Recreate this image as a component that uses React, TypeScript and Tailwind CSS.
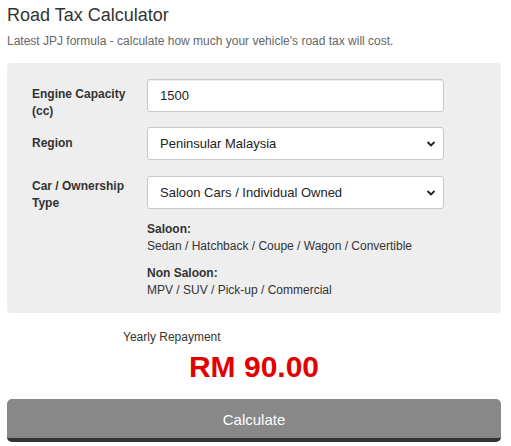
import React from "react";

function Chevron() {
  return (
    <svg width="10" height="7" viewBox="0 0 10 7" className="pointer-events-none absolute right-[8px] top-1/2 -translate-y-1/2">
      <path d="M1.5 1.5 L5 5 L8.5 1.5" fill="none" stroke="#222" strokeWidth="1.8" />
    </svg>
  );
}

export default function App() {
  return (
    <div className="w-[511px] h-[446px] bg-white pl-[7px] pr-[10px] pt-[4px] text-[#333]" style={{ fontFamily: '"Liberation Sans", Arial, sans-serif' }}>
      <h1 className="text-[18px] leading-[22px] text-[#333]">Road Tax Calculator</h1>
      <p className="mt-[7px] text-[12px] leading-[16px] text-[#666]">Latest JPJ formula - calculate how much your vehicle's road tax will cost.</p>

      <div className="mt-[14px] h-[250px] rounded-[3px] bg-[#eeeeee] pl-[25px] pt-[16px]">
        <div className="flex h-[33px] items-start">
          <label className="w-[115px] pt-[7px] text-[12px] font-bold leading-[17px] pr-[20px]">Engine Capacity (cc)</label>
          <input
            defaultValue="1500"
            className="h-[33px] w-[297px] rounded-[3px] border border-[#c8c8c8] bg-white px-[12px] text-[13px] text-[#222] shadow-[inset_0_1px_1px_rgba(0,0,0,0.08)] outline-none"
          />
        </div>
        <div className="mt-[15px] flex h-[33px] items-start">
          <label className="w-[115px] pt-[8px] text-[12px] font-bold leading-[17px]">Region</label>
          <div className="relative">
            <select className="h-[33px] w-[297px] appearance-none rounded-[3px] border border-[#c8c8c8] bg-white px-[12px] text-[13px] text-[#222] outline-none">
              <option>Peninsular Malaysia</option>
            </select>
            <Chevron />
          </div>
        </div>
        <div className="mt-[16px] flex items-start">
          <label className="w-[115px] pt-[2px] text-[12px] font-bold leading-[17px] pr-[20px]">Car / Ownership Type</label>
          <div>
            <div className="relative">
              <select className="h-[33px] w-[297px] appearance-none rounded-[3px] border border-[#c8c8c8] bg-white px-[12px] text-[13px] text-[#222] outline-none">
                <option>Saloon Cars / Individual Owned</option>
              </select>
              <Chevron />
            </div>
            <div className="mt-[12px] text-[12px] leading-[17px] text-[#333]">
              <div className="font-bold">Saloon:</div>
              <div>Sedan / Hatchback / Coupe / Wagon / Convertible</div>
              <div className="mt-[10px] font-bold">Non Saloon:</div>
              <div>MPV / SUV / Pick-up / Commercial</div>
            </div>
          </div>
        </div>
      </div>

      <div className="mt-[16px] ml-[116px] text-[12px] leading-[16px] text-[#333]">Yearly Repayment</div>
      <div className="mt-[5px] text-center text-[30px] font-bold leading-[34px] text-[#e30000]">RM 90.00</div>

      <button className="mt-[15px] flex h-[43px] w-full items-center justify-center rounded-[5px] border-b-[4px] border-[#333] bg-[#888] pt-[3px] text-[15px] text-white">
        Calculate
      </button>
    </div>
  );
}
